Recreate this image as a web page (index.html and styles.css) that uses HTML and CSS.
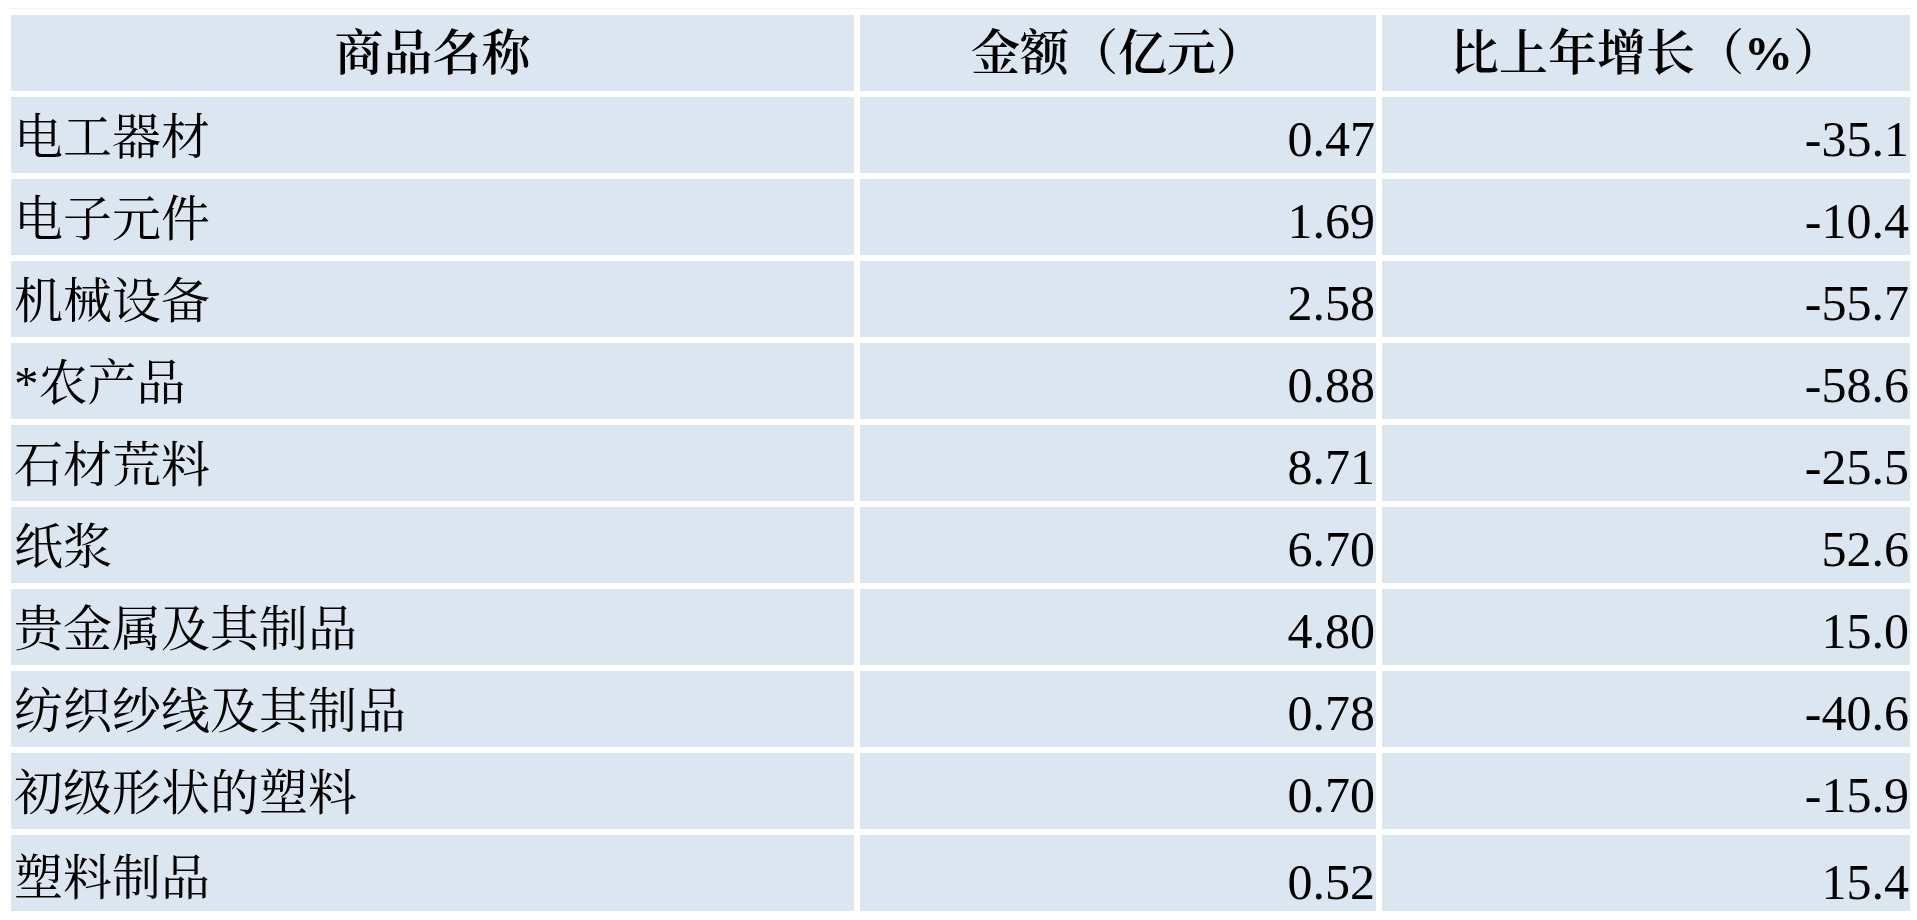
FILE: index.html
```html
<!DOCTYPE html>
<html lang="zh-CN">
<head>
<meta charset="utf-8">
<title>商品</title>
<link rel="stylesheet" href="styles.css">
</head>
<body>
<div class="page">
  <div class="topline"></div>
  <div class="grid">
    <div class="cell head">商品名称</div>
    <div class="cell head">金额（亿元）</div>
    <div class="cell head">比上年增长（%）</div>

    <div class="cell name">电工器材</div><div class="cell num">0.47</div><div class="cell num">-35.1</div>
    <div class="cell name">电子元件</div><div class="cell num">1.69</div><div class="cell num">-10.4</div>
    <div class="cell name">机械设备</div><div class="cell num">2.58</div><div class="cell num">-55.7</div>
    <div class="cell name">*农产品</div><div class="cell num">0.88</div><div class="cell num">-58.6</div>
    <div class="cell name">石材荒料</div><div class="cell num">8.71</div><div class="cell num">-25.5</div>
    <div class="cell name">纸浆</div><div class="cell num">6.70</div><div class="cell num">52.6</div>
    <div class="cell name">贵金属及其制品</div><div class="cell num">4.80</div><div class="cell num">15.0</div>
    <div class="cell name">纺织纱线及其制品</div><div class="cell num">0.78</div><div class="cell num">-40.6</div>
    <div class="cell name">初级形状的塑料</div><div class="cell num">0.70</div><div class="cell num">-15.9</div>
    <div class="cell name last">塑料制品</div><div class="cell num last">0.52</div><div class="cell num last">15.4</div>
  </div>
</div>
</body>
</html>
```

FILE: styles.css
```css
html, body {
  margin: 0;
  padding: 0;
  background: #ffffff;
}
body {
  font-family: "Liberation Serif", "Noto Serif CJK SC", "Noto Sans CJK SC", serif;
  color: #000000;
  overflow: hidden;
}
.page {
  padding: 8px 4px 0 8px;
}
.topline {
  height: 1px;
  width: 1905px;
  background: #f1f3f5;
  margin-bottom: 6px;
}
.grid {
  margin-left: 3px;
  display: grid;
  grid-template-columns: 843px 516px 528px;
  grid-auto-rows: 76.2px;
  column-gap: 6px;
  row-gap: 5.8px;
}
.cell {
  background: #dce6f0;
  display: flex;
  align-items: center;
  font-size: 49px;
  line-height: 1.1;
  white-space: nowrap;
}
.head {
  justify-content: center;
  font-weight: 600;
  padding-top: 2px;
}
.name {
  justify-content: flex-start;
  padding-left: 3px;
  padding-top: 6px;
}
.num {
  justify-content: flex-end;
  font-size: 50px;
  padding-right: 1px;
  padding-top: 9px;
}
.num.last {
  align-items: flex-end;
  padding-top: 0;
  padding-bottom: 1px;
}
.name.last {
  padding-top: 12px;
}
```
